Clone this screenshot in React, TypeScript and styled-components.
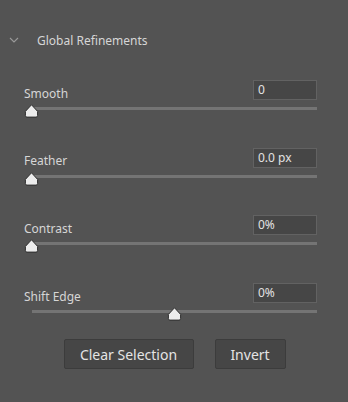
import styled, { createGlobalStyle } from "styled-components";

const GlobalStyle = createGlobalStyle`
  body {
    margin: 0;
    background: #535353;
    font-family: "Noto Sans", "Open Sans", Arial, sans-serif;
  }
`;

type Field = { label: string; value: string; pct: number };

const fields: Field[] = [
  { label: "Smooth", value: "0", pct: 0 },
  { label: "Feather", value: "0.0 px", pct: 0 },
  { label: "Contrast", value: "0%", pct: 0 },
  { label: "Shift Edge", value: "0%", pct: 50 },
];

const TRACK_LEFT = 32;
const TRACK_RIGHT = 317;

export default function App() {
  return (
    <Panel>
      <GlobalStyle />
      <Header>
        <Chevron width="10" height="7" viewBox="0 0 10 7">
          <path d="M1 1 L5 5 L9 1" fill="none" stroke="#9a9a9a" strokeWidth="1.1" />
        </Chevron>
        <Title>Global Refinements</Title>
      </Header>
      <Rows>
        {fields.map((f) => (
          <Row key={f.label}>
            <LabelRow>
              <Label>{f.label}</Label>
              <ValueBox>{f.value}</ValueBox>
            </LabelRow>
            <Slider>
              <Track />
              <Thumb
                style={{ left: TRACK_LEFT - 1 + (f.pct / 100) * (TRACK_RIGHT - TRACK_LEFT) - 7 }}
                width="15"
                height="14"
                viewBox="0 0 15 14"
              >
                <path
                  d="M7.5 0.8 L13.6 7.4 L13.6 11.6 Q13.6 13.1 12.1 13.1 L2.9 13.1 Q1.4 13.1 1.4 11.6 L1.4 7.4 Z"
                  fill="#ececec"
                  stroke="#2e2e2e"
                  strokeWidth="1"
                  strokeLinejoin="round"
                />
              </Thumb>
            </Slider>
          </Row>
        ))}
      </Rows>
      <Buttons>
        <Button $w={130}>Clear Selection</Button>
        <Button $w={71}>Invert</Button>
      </Buttons>
    </Panel>
  );
}

const Panel = styled.div`
  width: 348px;
  height: 402px;
  background: #535353;
  color: #d4d4d4;
  font-size: 12px;
  box-sizing: border-box;
  padding-top: 31px;
`;
const Header = styled.div`
  display: flex;
  align-items: center;
  height: 18px;
  padding-left: 9px;
`;
const Chevron = styled.svg`
  display: block;
  margin-right: 18px;
  margin-top: 1px;
`;
const Title = styled.span`
  color: #d6d6d6;
  font-size: 12px;
`;
const Rows = styled.div`
  display: flex;
  flex-direction: column;
  gap: 29.7px;
  margin-top: 31px;
`;
const Row = styled.div`
  display: flex;
  flex-direction: column;
`;
const LabelRow = styled.div`
  display: flex;
  align-items: center;
  justify-content: space-between;
  height: 20px;
  padding-left: 24px;
  padding-right: 31px;
`;
const Label = styled.span`
  color: #d6d6d6;
  margin-top: 6px;
`;
const ValueBox = styled.div`
  width: 64px;
  height: 20px;
  box-sizing: border-box;
  border: 1px solid #626262;
  background: #464646;
  color: #e2e2e2;
  padding-left: 4px;
  line-height: 18px;
  font-size: 12px;
`;
const Slider = styled.div`
  position: relative;
  height: 13px;
  margin-top: 5px;
`;
const Track = styled.div`
  margin-left: ${TRACK_LEFT}px;
  width: ${TRACK_RIGHT - TRACK_LEFT}px;
  height: 3px;
  margin-top: 2px;
  background: #747474;
`;
const Thumb = styled.svg`
  position: absolute;
  top: -1px;
  display: block;
`;
const Buttons = styled.div`
  display: flex;
  justify-content: center;
  gap: 21px;
  margin-top: 18px;
  padding-left: 1px;
`;
const Button = styled.button<{ $w: number }>`
  width: ${(p) => p.$w}px;
  height: 30px;
  box-sizing: border-box;
  background: #464646;
  border: 1px solid #3c3c3c;
  border-radius: 2px;
  color: #e4e4e4;
  font-family: "Noto Sans", "Open Sans", Arial, sans-serif;
  font-size: 14px;
  padding: 0;
`;
